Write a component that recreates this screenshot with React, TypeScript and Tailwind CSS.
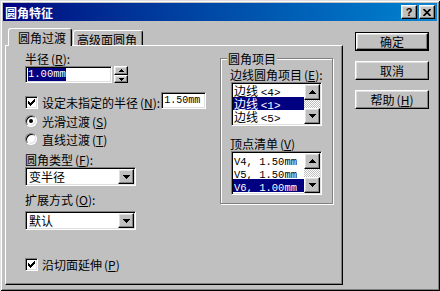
import type { ReactNode } from 'react';

const raised =
  'border border-t-white border-l-white border-r-black border-b-black shadow-[inset_-1px_-1px_0_#808080,inset_1px_1px_0_#dfdfdf]';
const sunken =
  'border border-t-[#808080] border-l-[#808080] border-r-white border-b-white shadow-[inset_1px_1px_0_#000,inset_-1px_-1px_0_#dfdfdf] p-[1px]';
const mono = "font-['Liberation_Mono','Noto_Sans_CJK_SC',monospace]";

function Key({ k }: { k: string }) {
  return (
    <span className="ml-[2px]">
      (<span className="underline">{k}</span>)
    </span>
  );
}

function Tri({ down = false, small = false }: { down?: boolean; small?: boolean }) {
  const up = small
    ? 'M2 0h1v1h-1zM1 1h3v1h-3zM0 2h5v1h-5z'
    : 'M3 0h1v1h-1zM2 1h3v1h-3zM1 2h5v1h-5zM0 3h7v1h-7z';
  const dn = small
    ? 'M0 0h5v1h-5zM1 1h3v1h-3zM2 2h1v1h-1z'
    : 'M0 0h7v1h-7zM1 1h5v1h-5zM2 2h3v1h-3zM3 3h1v1h-1z';
  const w = small ? 5 : 7;
  const h = small ? 3 : 4;
  return (
    <svg width={w} height={h} viewBox={`0 0 ${w} ${h}`} shapeRendering="crispEdges">
      <path d={down ? dn : up} fill="#000" />
    </svg>
  );
}

function Check() {
  return (
    <span className={`${sunken} w-[13px] h-[13px] bg-white flex items-center justify-center shrink-0`}>
      <svg width="7" height="7" viewBox="0 0 7 7" shapeRendering="crispEdges">
        <path
          d="M6 0h1v1h-1zM5 1h2v1h-2zM0 2h1v1h-1zM4 2h3v1h-3zM0 3h2v1h-2zM3 3h3v1h-3zM0 4h5v1h-5zM1 5h3v1h-3zM2 6h1v1h-1z"
          fill="#000"
        />
      </svg>
    </span>
  );
}

function Radio({ on = false }: { on?: boolean }) {
  return (
    <span className="w-[12px] h-[12px] rounded-full bg-white border border-t-[#808080] border-l-[#808080] border-r-white border-b-white shadow-[inset_1px_1px_0_#000,inset_-1px_-1px_0_#dfdfdf] flex items-center justify-center shrink-0">
      {on && <span className="w-[4px] h-[4px] rounded-full bg-black" />}
    </span>
  );
}

function Select({ value }: { value: string }) {
  return (
    <div className={`${sunken} w-[111px] h-[19px] bg-white flex`}>
      <span className="flex-1 pl-[2px] pt-[1px]">{value}</span>
      <span className={`${raised} w-[16px] h-full bg-[#c0c0c0] flex items-center justify-center`}>
        <Tri down />
      </span>
    </div>
  );
}

function ListBox({ items, sel }: { items: ReactNode[]; sel: number }) {
  return (
    <div className={`${sunken} ml-[1px] w-[91px] h-[44px] bg-white flex`}>
      <div className="flex-1 min-w-0 flex flex-col">
        {items.map((it, i) => (
          <div
            key={i}
            className={`h-[13px] leading-[13px] pl-[1px] whitespace-nowrap ${i === sel ? 'bg-[#000080] text-white' : ''}`}
          >
            {it}
          </div>
        ))}
      </div>
      <div className="w-[16px] shrink-0 flex flex-col">
        <span className={`${raised} h-[16px] bg-[#c0c0c0] flex items-center justify-center`}>
          <Tri />
        </span>
        <span className="flex-1 bg-[repeating-conic-gradient(#c0c0c0_0%_25%,#fff_0%_50%)] bg-[length:2px_2px]" />
        <span className={`${raised} h-[16px] bg-[#c0c0c0] flex items-center justify-center`}>
          <Tri down />
        </span>
      </div>
    </div>
  );
}

function Btn({ children, def = false }: { children: ReactNode; def?: boolean }) {
  const face = (
    <div className={`${raised} h-full bg-[#c0c0c0] flex items-center justify-center`}>{children}</div>
  );
  return def ? <div className="h-[19px] border border-black">{face}</div> : <div className="h-[19px]">{face}</div>;
}

function TitleBar() {
  return (
    <div className="h-[18px] flex items-center bg-linear-to-r from-[#000080] to-[#1084d0] pl-[2px] pr-[2px]">
      <span className="flex-1 text-white font-bold">圆角特征</span>
      <span className={`${raised} w-[16px] h-[14px] bg-[#c0c0c0] flex items-center justify-center font-['Liberation_Sans',sans-serif] font-bold text-[11px] leading-none`}>
        ?
      </span>
      <span className={`${raised} ml-[2px] w-[16px] h-[14px] bg-[#c0c0c0] flex items-center justify-center`}>
        <svg width="8" height="7" viewBox="0 0 8 7">
          <path d="M0.5 0L7.5 7M7.5 0L0.5 7" stroke="#000" strokeWidth="1.7" />
        </svg>
      </span>
    </div>
  );
}

function Tabs() {
  return (
    <div className="flex items-end h-[17px] pl-[3px]">
      <div className="relative z-10 -mb-[1px] h-[18px] w-[64px] bg-[#c0c0c0] border-t border-l border-r border-t-white border-l-white border-r-black rounded-t-[3px] shadow-[inset_-1px_0_0_#808080] pt-[2px] pl-[9px]">
        圆角过渡
      </div>
      <div className="ml-[1px] h-[15px] w-[70px] border-t border-l border-r border-t-white border-l-white border-r-black rounded-t-[3px] shadow-[inset_-1px_0_0_#808080] pt-[2px] pl-[3px]">
        高级面圆角
      </div>
    </div>
  );
}

function LeftCol() {
  return (
    <div className="w-[195px] flex flex-col pt-[6px]">
      <div className="h-[13px]">
        半径<Key k="R" />:
      </div>
      <div className="mt-[1px] flex h-[17px]">
        <div className={`${sunken} w-[87px] h-[17px] bg-white flex items-center`}>
          <span className={`${mono} ml-[1px] text-[10.5px] leading-[13px] bg-[#000080] text-white`}>1.00mm</span>
        </div>
        <div className="ml-[2px] w-[14px] flex flex-col">
          <span className={`${raised} h-[9px] bg-[#c0c0c0] flex items-center justify-center`}>
            <Tri small />
          </span>
          <span className={`${raised} h-[8px] bg-[#c0c0c0] flex items-center justify-center`}>
            <Tri small down />
          </span>
        </div>
      </div>
      <div className="mt-[9px] flex items-end h-[17px]">
        <div className="flex items-center gap-[4px] h-[13px]">
          <Check />
          <span className="whitespace-nowrap">
            设定未指定的半径<Key k="N" />:
          </span>
        </div>
        <div className={`${sunken} ml-[1px] w-[45px] h-[17px] bg-white flex items-center shrink-0`}>
          <span className={`${mono} ml-[1px] text-[10px] leading-[13px]`}>1.50mm</span>
        </div>
      </div>
      <div className="mt-[4px] h-[16px] flex items-center gap-[5px]">
        <Radio on />
        <span>
          光滑过渡<Key k="S" />
        </span>
      </div>
      <div className="mt-[2px] h-[16px] flex items-center gap-[5px]">
        <Radio />
        <span>
          直线过渡<Key k="T" />
        </span>
      </div>
      <div className="mt-[6px] h-[13px]">
        圆角类型<Key k="F" />:
      </div>
      <div className="mt-[1px]">
        <Select value="变半径" />
      </div>
      <div className="mt-[7px] h-[13px]">
        扩展方式<Key k="O" />:
      </div>
      <div className="mt-[5px]">
        <Select value="默认" />
      </div>
      <div className="mt-[28px] h-[13px] flex items-center gap-[4px]">
        <Check />
        <span>
          沿切面延伸<Key k="P" />
        </span>
      </div>
    </div>
  );
}

function GroupBox() {
  return (
    <div className="relative mt-[12px] w-[113px] h-[146px] border border-[#808080] shadow-[inset_1px_1px_0_#fff,1px_1px_0_#fff] pt-[9px] pl-[9px] flex flex-col">
      <span className="absolute -top-[7px] left-[6px] px-[1px] bg-[#c0c0c0] leading-[13px]">圆角项目</span>
      <div className="h-[13px] whitespace-nowrap">
        边线圆角项目<Key k="E" />:
      </div>
      <div className="mt-[1px]">
        <ListBox
          sel={1}
          items={[
            <span>边线 <span className={`${mono} text-[11px]`}>&lt;4&gt;</span></span>,
            <span>边线 <span className={`${mono} text-[11px]`}>&lt;1&gt;</span></span>,
            <span>边线 <span className={`${mono} text-[11px]`}>&lt;5&gt;</span></span>,
          ]}
        />
      </div>
      <div className="mt-[11px] h-[13px]">
        顶点清单<Key k="V" />
      </div>
      <div className="mt-[1px]">
        <ListBox
          sel={2}
          items={[
            <span className={`${mono} text-[10.5px]`}>V4, 1.50mm</span>,
            <span className={`${mono} text-[10.5px]`}>V5, 1.50mm</span>,
            <span className={`${mono} text-[10.5px]`}>V6, 1.00mm</span>,
          ]}
        />
      </div>
    </div>
  );
}

export default function App() {
  return (
    <div className="w-[440px] h-[291px] bg-[#c0c0c0] p-[3px] flex flex-col shadow-[inset_1px_1px_0_#dfdfdf,inset_-1px_-1px_0_#000,inset_2px_2px_0_#fff,inset_-2px_-2px_0_#808080] font-['Noto_Sans_CJK_SC',sans-serif] text-[12px] leading-[13px] text-black">
      <TitleBar />
      <div className="flex mt-[7px]">
        <div className="ml-[2px] w-[338px] flex flex-col">
          <Tabs />
          {/* tab panel */}
          <div className="h-[240px] flex border border-t-white border-l-white border-r-black border-b-black shadow-[inset_-1px_-1px_0_#808080] pl-[19px]">
            <LeftCol />
            <GroupBox />
          </div>
        </div>
        <div className="ml-[12px] w-[74px] flex flex-col pt-[4px] gap-[10px]">
          <Btn def>确定</Btn>
          <Btn>取消</Btn>
          <Btn>
            帮助<Key k="H" />
          </Btn>
        </div>
      </div>
    </div>
  );
}
